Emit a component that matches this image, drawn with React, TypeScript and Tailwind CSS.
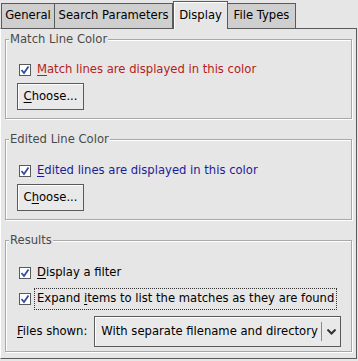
const Check = () => (
  <span className="w-[12px] h-[12px] border border-[#5a5a5a] bg-white flex items-center justify-center shrink-0">
    <svg width="10" height="10" viewBox="0 0 10 10">
      <path d="M1.5 5 L4 8 L8.5 1.5" fill="none" stroke="#2f4f9f" strokeWidth="1.8" />
    </svg>
  </span>
);

function Frame({ title, children, h }: { title: string; children: React.ReactNode; h: string }) {
  return (
    <div className={`relative mx-[4px] ${h} border border-[#a8a8a8] shadow-[inset_1px_1px_0_#ffffff,1px_1px_0_#ffffff]`}>
      <span className="absolute left-[3px] top-[-9px] px-[1px] bg-[#e6e6e6] text-[#4a4a4a] leading-[16px]">
        {title}
      </span>
      {children}
    </div>
  );
}

function ChooseBtn({ u, rest, pre }: { pre: string; u: string; rest: string }) {
  return (
    <div className="ml-[11px] mt-[6px] w-[67px] h-[27px] border border-[#5a5a5a] bg-[#e9e9e9] shadow-[inset_1px_1px_0_#ffffff] flex items-center justify-center text-black">
      {pre}
      <span className="underline underline-offset-2">{u}</span>
      {rest}
    </div>
  );
}

export default function App() {
  return (
    <div
      className="w-[358px] h-[361px] bg-[#e6e6e6] text-[11.6px] overflow-hidden whitespace-nowrap"
      style={{ fontFamily: '"DejaVu Sans", sans-serif' }}
    >
      {/* Tabs */}
      <div className="flex items-end h-[28px] pl-[1px]">
        <div className="w-[54px] h-[25px] flex items-center justify-center bg-[#cfcfcf] border border-b-0 border-[#5a5a5a] text-black">
          General
        </div>
        <div className="w-[118px] h-[25px] flex items-center justify-center bg-[#cfcfcf] border border-l-0 border-b-0 border-[#5a5a5a] text-black">
          Search Parameters
        </div>
        <div className="relative z-10 w-[55px] h-[28px] mb-[-1px] flex items-center justify-center bg-[#e6e6e6] border border-b-0 border-[#5a5a5a] shadow-[inset_1px_1px_0_#ffffff] text-black">
          Display
        </div>
        <div className="w-[68px] h-[25px] flex items-center justify-center bg-[#cfcfcf] border border-l-0 border-b-0 border-[#5a5a5a] text-black">
          File Types
        </div>
      </div>

      {/* Panel */}
      <div className="h-[331px] mr-[1px] border-t border-r border-b border-[#5a5a5a] border-l border-l-[#ffffff] pt-[10px]">
        <Frame title="Match Line Color" h="h-[80px]">
          <div className="flex items-center gap-[6px] ml-[13px] mt-[23px] h-[14px] text-[#b22222]">
            <Check />
            <span>
              <span className="underline underline-offset-2">M</span>atch lines are displayed in this color
            </span>
          </div>
          <ChooseBtn pre="" u="C" rest="hoose..." />
        </Frame>

        <div className="h-[20px]" />
        <Frame title="Edited Line Color" h="h-[81px]">
          <div className="flex items-center gap-[6px] ml-[13px] mt-[24px] h-[14px] text-[#1c1c9a]">
            <Check />
            <span>
              <span className="underline underline-offset-2">E</span>dited lines are displayed in this color
            </span>
          </div>
          <ChooseBtn pre="C" u="h" rest="oose..." />
        </Frame>

        <div className="h-[20px]" />
        <Frame title="Results" h="h-[112px]">
          <div className="flex items-center gap-[6px] ml-[13px] mt-[25px] h-[14px] text-black">
            <Check />
            <span>
              <span className="underline underline-offset-2">D</span>isplay a filter
            </span>
          </div>
          <div className="flex items-center gap-[3px] ml-[13px] mt-[12px] h-[14px] text-black">
            <Check />
            <span className="border border-dotted border-[#333] px-[2px] h-[22px] flex items-center">
              Expand&nbsp;<span className="underline underline-offset-2">i</span>tems to list the matches as they are found
            </span>
          </div>
          <div className="flex items-center ml-[11px] mt-[10px] gap-[7px] text-black">
            <span>
              <span className="underline underline-offset-2">F</span>iles shown:
            </span>
            <div className="w-[247px] h-[31px] border border-[#5a5a5a] bg-[#e9e9e9] shadow-[inset_1px_1px_0_#ffffff] flex items-center">
              <span className="flex-1 pl-[6px]">With separate filename and directory</span>
              <span className="w-px h-[19px] bg-[#8a8a8a]" />
              <span className="w-[18px] flex justify-center">
                <svg width="9" height="6" viewBox="0 0 9 6">
                  <path d="M0.5 0.5 L4.5 4.5 L8.5 0.5" fill="none" stroke="#333" strokeWidth="2" />
                </svg>
              </span>
            </div>
          </div>
        </Frame>
      </div>
    </div>
  );
}
